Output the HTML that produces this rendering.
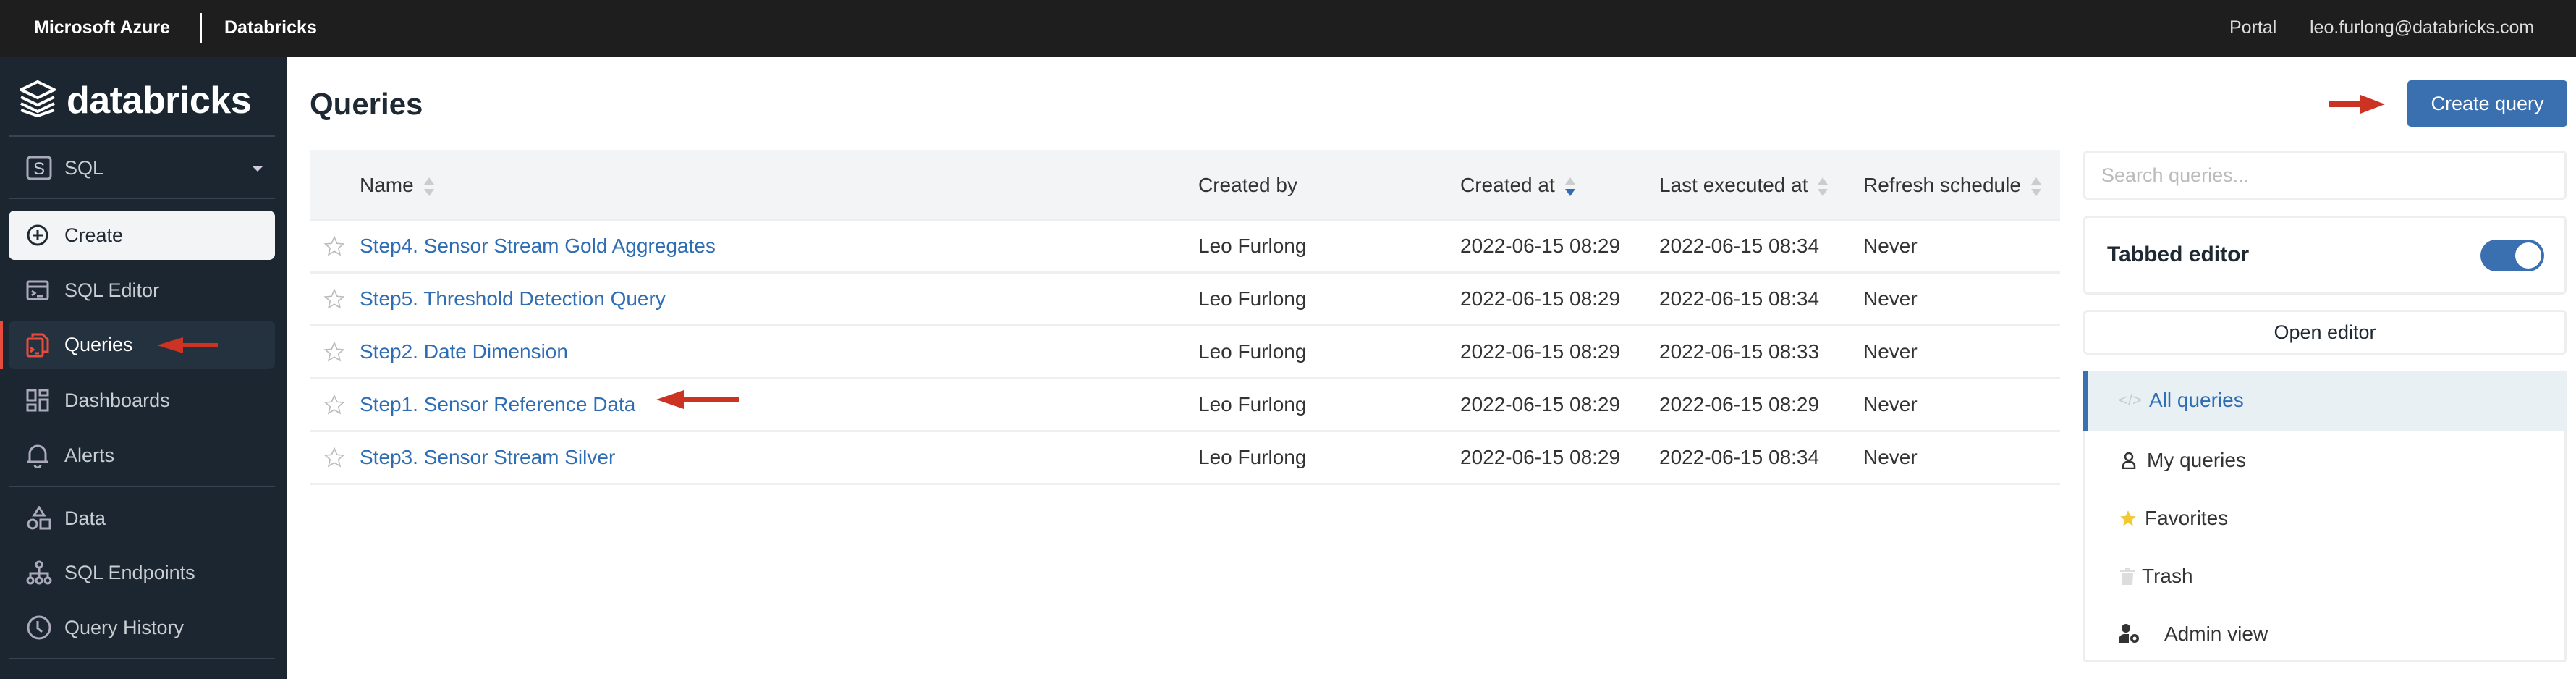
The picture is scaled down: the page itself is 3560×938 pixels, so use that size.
<!DOCTYPE html>
<html><head><meta charset="utf-8"><style>
*{box-sizing:border-box;margin:0;padding:0}
body{width:3560px;height:938px;overflow:hidden;font-family:"Liberation Sans",sans-serif;background:#fff;position:relative}
.abs{position:absolute}
.top{left:0;top:0;width:3560px;height:79px;background:#1e1e1e;color:#fff}
.side{left:0;top:79px;width:396px;height:859px;background:#1b2631}
.nav{position:absolute;left:12px;width:368px;height:68px;display:flex;align-items:center;color:#c9ced3;font-size:27px}
.nav svg{position:absolute;left:24px}
.nav span{position:absolute;left:77px}
.hr{position:absolute;left:12px;width:368px;height:2px;background:#37434e}
.th{position:absolute;top:207px;height:98px;line-height:98px;font-size:28px;color:#333}
.row{position:absolute;left:428px;width:2419px;height:73px;border-bottom:3px solid #eeeff1}
.row div{position:absolute;top:0;line-height:70px;font-size:28px;color:#333}
.row .n{left:69px;color:#2e6db3}
.sort{display:inline-block;vertical-align:middle;margin-left:14px;width:14px;height:30px;position:relative}
.sort:before{content:"";position:absolute;top:2px;left:0;border:7px solid transparent;border-bottom:10px solid #ccc;border-top:0}
.sort:after{content:"";position:absolute;bottom:2px;left:0;border:7px solid transparent;border-top:10px solid #ccc;border-bottom:0}
.sort.d:after{border-top-color:#2e6db3}
.card{position:absolute;left:2879px;width:668px;border:3px solid #eceeef;border-radius:6px;background:#fff}
.li{position:absolute;left:0;width:100%;height:80px;font-size:28px;color:#333;line-height:80px}
</style></head><body>
<div class="abs top">
 <div class="abs" style="left:47px;top:24px;font-size:25px;font-weight:bold">Microsoft Azure</div>
 <div class="abs" style="left:277px;top:18px;width:2px;height:42px;background:#fff"></div>
 <div class="abs" style="left:310px;top:24px;font-size:25px;font-weight:bold">Databricks</div>
 <div class="abs" style="left:3081px;top:24px;font-size:25px;color:#ddd">Portal</div>
 <div class="abs" style="left:3192px;top:24px;font-size:25px;color:#ddd">leo.furlong@databricks.com</div>
</div>
<div class="abs side">
 <svg class="abs" style="left:27px;top:31px" width="50" height="52" viewBox="0 0 50 52" fill="none" stroke="#fff" stroke-width="4"><path d="M2 14 L25 3 L48 14 L25 25 Z"/><path d="M2 24 L25 35 L48 24"/><path d="M2 33 L25 44 L48 33"/><path d="M2 42 L25 50 L48 42"/></svg>
 <div class="abs" style="left:92px;top:30px;font-size:52px;font-weight:bold;color:#fff;letter-spacing:-0.5px">databricks</div>
 <div class="hr" style="top:108px"></div>
 <div class="nav" style="top:118px;height:70px"><svg width="36" height="36" viewBox="0 0 36 36"><rect x="2" y="3" width="32" height="30" rx="4" fill="none" stroke="#aab" stroke-width="3"/><text x="18" y="27" text-anchor="middle" font-size="24" fill="#ccd" font-family="Liberation Sans">S</text></svg><span>SQL</span><div class="abs" style="left:336px;top:32px;border:8px solid transparent;border-top:8px solid #ccd"></div></div>
 <div class="hr" style="top:194px"></div>
 <div class="nav" style="top:212px;background:#f3f4f6;border-radius:8px;color:#1f2933"><svg width="32" height="32" viewBox="0 0 32 32" fill="none" stroke="#1f2933" stroke-width="3"><circle cx="16" cy="16" r="13"/><path d="M16 9v14M9 16h14"/></svg><span>Create</span></div>
 <div class="nav" style="top:288px"><svg width="32" height="32" viewBox="0 0 32 32" fill="none" stroke="#aab" stroke-width="3"><rect x="2" y="4" width="28" height="24" rx="2"/><path d="M2 11h28M8 17l4 3-4 3M15 24h8"/></svg><span>SQL Editor</span></div>
 <div class="abs" style="left:0;top:364px;width:4px;height:67px;background:#e74c3c"></div>
 <div class="nav" style="top:364px;height:67px;background:#24323f;border-radius:8px;color:#fff"><svg width="32" height="34" viewBox="0 0 32 34" fill="none" stroke="#e74c3c" stroke-width="3"><path d="M9 6V2h14l7 7v17h-7"/><rect x="2" y="8" width="21" height="24" rx="2"/><path d="M6 20l4 3-4 3M12 28h6"/></svg><span>Queries</span></div>
 <div class="nav" style="top:440px"><svg width="32" height="32" viewBox="0 0 32 32" fill="none" stroke="#aab" stroke-width="3"><rect x="2" y="2" width="11" height="14"/><rect x="19" y="2" width="11" height="7"/><rect x="2" y="22" width="11" height="8"/><rect x="19" y="15" width="11" height="15"/></svg><span>Dashboards</span></div>
 <div class="nav" style="top:516px"><svg width="32" height="34" viewBox="0 0 32 34" fill="none" stroke="#aab" stroke-width="3"><path d="M5 26V15a11 11 0 0 1 22 0v11h3H2zM12 30a4 4 0 0 0 8 0"/></svg><span>Alerts</span></div>
 <div class="hr" style="top:592px"></div>
 <div class="nav" style="top:603px"><svg width="36" height="34" viewBox="0 0 36 34" fill="none" stroke="#aab" stroke-width="3"><path d="M18 2l7 11H11z"/><circle cx="9" cy="25" r="6"/><rect x="20" y="19" width="13" height="12"/></svg><span>Data</span></div>
 <div class="nav" style="top:678px"><svg width="36" height="34" viewBox="0 0 36 34" fill="none" stroke="#aab" stroke-width="3"><circle cx="18" cy="6" r="4"/><path d="M18 10v8M6 24v-6h24v6M18 18v6"/><circle cx="6" cy="28" r="4"/><circle cx="18" cy="28" r="4"/><circle cx="30" cy="28" r="4"/></svg><span>SQL Endpoints</span></div>
 <div class="nav" style="top:754px"><svg width="36" height="34" viewBox="0 0 36 34" fill="none" stroke="#aab" stroke-width="3"><circle cx="18" cy="17" r="15"/><path d="M16 8v10l6 5"/></svg><span>Query History</span></div>
 <div class="hr" style="top:830px"></div>
</div>
<svg class="abs" style="left:215px;top:462px" width="90" height="30"><path d="M86 12H38V4L2 15l36 11v-8h48z" fill="#cc3322"/></svg>
<svg class="abs" style="left:905px;top:536px" width="120" height="32"><path d="M116 13H40V3L2 16l38 13V19h76z" fill="#cc3322"/></svg>
<svg class="abs" style="left:3216px;top:128px" width="82" height="32"><path d="M2 12h44V3l34 13-34 13v-9H2z" fill="#cc3322"/></svg>

<div class="abs" style="left:428px;top:120px;font-size:42px;font-weight:bold;color:#1f2933">Queries</div>
<div class="abs" style="left:428px;top:207px;width:2419px;height:98px;background:#f3f4f6;border-bottom:3px solid #eceeef"></div>
<div class="th" style="left:497px">Name<i class="sort"></i></div>
<div class="th" style="left:1656px">Created by</div>
<div class="th" style="left:2018px">Created at<i class="sort d"></i></div>
<div class="th" style="left:2293px">Last executed at<i class="sort"></i></div>
<div class="th" style="left:2575px">Refresh schedule<i class="sort"></i></div>

<div class="row" style="top:305px"><svg class="abs" style="left:19px;top:20px" width="30" height="30" viewBox="0 0 24 24"><path d="M12 2l3 7 7 .6-5.4 4.7 1.7 7.2L12 17.8 5.7 21.5l1.7-7.2L2 9.6 9 9z" fill="none" stroke="#bbb" stroke-width="1.3"/></svg><div class="n">Step4. Sensor Stream Gold Aggregates</div><div style="left:1228px">Leo Furlong</div><div style="left:1590px">2022-06-15 08:29</div><div style="left:1865px">2022-06-15 08:34</div><div style="left:2147px">Never</div></div>
<div class="row" style="top:378px"><svg class="abs" style="left:19px;top:20px" width="30" height="30" viewBox="0 0 24 24"><path d="M12 2l3 7 7 .6-5.4 4.7 1.7 7.2L12 17.8 5.7 21.5l1.7-7.2L2 9.6 9 9z" fill="none" stroke="#bbb" stroke-width="1.3"/></svg><div class="n">Step5. Threshold Detection Query</div><div style="left:1228px">Leo Furlong</div><div style="left:1590px">2022-06-15 08:29</div><div style="left:1865px">2022-06-15 08:34</div><div style="left:2147px">Never</div></div>
<div class="row" style="top:451px"><svg class="abs" style="left:19px;top:20px" width="30" height="30" viewBox="0 0 24 24"><path d="M12 2l3 7 7 .6-5.4 4.7 1.7 7.2L12 17.8 5.7 21.5l1.7-7.2L2 9.6 9 9z" fill="none" stroke="#bbb" stroke-width="1.3"/></svg><div class="n">Step2. Date Dimension</div><div style="left:1228px">Leo Furlong</div><div style="left:1590px">2022-06-15 08:29</div><div style="left:1865px">2022-06-15 08:33</div><div style="left:2147px">Never</div></div>
<div class="row" style="top:524px"><svg class="abs" style="left:19px;top:20px" width="30" height="30" viewBox="0 0 24 24"><path d="M12 2l3 7 7 .6-5.4 4.7 1.7 7.2L12 17.8 5.7 21.5l1.7-7.2L2 9.6 9 9z" fill="none" stroke="#bbb" stroke-width="1.3"/></svg><div class="n">Step1. Sensor Reference Data</div><div style="left:1228px">Leo Furlong</div><div style="left:1590px">2022-06-15 08:29</div><div style="left:1865px">2022-06-15 08:29</div><div style="left:2147px">Never</div></div>
<div class="row" style="top:597px"><svg class="abs" style="left:19px;top:20px" width="30" height="30" viewBox="0 0 24 24"><path d="M12 2l3 7 7 .6-5.4 4.7 1.7 7.2L12 17.8 5.7 21.5l1.7-7.2L2 9.6 9 9z" fill="none" stroke="#bbb" stroke-width="1.3"/></svg><div class="n">Step3. Sensor Stream Silver</div><div style="left:1228px">Leo Furlong</div><div style="left:1590px">2022-06-15 08:29</div><div style="left:1865px">2022-06-15 08:34</div><div style="left:2147px">Never</div></div>

<div class="abs" style="left:3327px;top:111px;width:221px;height:64px;background:#3a70b0;border-radius:5px;color:#fff;font-size:27px;line-height:64px;text-align:center">Create query</div>
<div class="card" style="top:208px;height:68px;font-size:27px;color:#bbb;line-height:62px;padding-left:22px">Search queries...</div>
<div class="card" style="top:298px;height:109px">
 <div class="abs" style="left:30px;top:34px;font-size:30px;font-weight:bold;color:#1f2933">Tabbed editor</div>
 <div class="abs" style="left:546px;top:30px;width:88px;height:44px;border-radius:22px;background:#3a70b0"><div class="abs" style="left:48px;top:4px;width:36px;height:36px;border-radius:50%;background:#fff"></div></div>
</div>
<div class="card" style="top:428px;height:62px;font-size:27px;color:#1f2933;line-height:56px;text-align:center">Open editor</div>
<div class="card" style="top:513px;height:402px;border-radius:4px">
 <div class="li" style="top:-3px;left:-3px;width:668px;height:83px;background:#e8f0f4;border-left:6px solid #3a70b0;line-height:80px;color:#2e6db3"><span class="abs" style="left:43px;color:#ccc;font-size:22px">&lt;/&gt;</span><span class="abs" style="left:85px">All queries</span></div>
 <div class="li" style="top:80px"><svg class="abs" style="left:50px;top:28px" width="20" height="24" viewBox="0 0 20 24" fill="none" stroke="#333" stroke-width="2.5"><circle cx="10" cy="7" r="5"/><path d="M2 23v-3a6 6 0 0 1 6-6h4a6 6 0 0 1 6 6v3z"/></svg><span class="abs" style="left:85px">My queries</span></div>
 <div class="li" style="top:160px"><svg class="abs" style="left:46px;top:27px" width="26" height="26" viewBox="0 0 24 24"><path d="M12 2l3 7 7 .6-5.4 4.7 1.7 7.2L12 17.8 5.7 21.5l1.7-7.2L2 9.6 9 9z" fill="#f3c933"/></svg><span class="abs" style="left:82px">Favorites</span></div>
 <div class="li" style="top:240px"><svg class="abs" style="left:48px;top:28px" width="20" height="24" viewBox="0 0 20 24" fill="#ddd"><rect x="0" y="3" width="20" height="3"/><rect x="7" y="0" width="6" height="3"/><path d="M2 7h16l-1 17H3z"/></svg><span class="abs" style="left:78px">Trash</span></div>
 <div class="li" style="top:320px"><svg class="abs" style="left:46px;top:26px" width="30" height="28" viewBox="0 0 30 28" fill="#333"><circle cx="10" cy="6" r="6"/><path d="M0 26v-4a8 8 0 0 1 8-8h6v12z"/><circle cx="22" cy="20" r="6"/><circle cx="22" cy="20" r="2.5" fill="#fff"/></svg><span class="abs" style="left:109px">Admin view</span></div>
</div>
</body></html>
